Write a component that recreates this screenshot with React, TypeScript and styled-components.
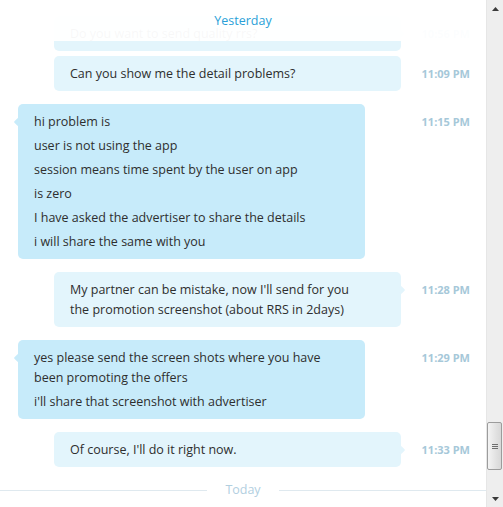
import React from "react";
import styled, { createGlobalStyle } from "styled-components";

const GlobalStyle = createGlobalStyle`
  html, body {
    margin: 0;
    padding: 0;
    background: #ffffff;
  }
  body {
    font-family: "Open Sans", "Noto Sans", sans-serif;
    -webkit-font-smoothing: antialiased;
  }
`;

type Side = "in" | "out";

type Message = {
  side: Side;
  time: string;
  nub: boolean;
  lines: string[];
};

const messages: Message[] = [
  { side: "out", time: "10:56 PM", nub: true, lines: ["Do you want to send quality rrs?"] },
  { side: "out", time: "11:09 PM", nub: false, lines: ["Can you show me the detail problems?"] },
  {
    side: "in",
    time: "11:15 PM",
    nub: true,
    lines: [
      "hi problem is",
      "user is not using the app",
      "session means time spent by the user on app",
      "is zero",
      "I have asked the advertiser to share the details",
      "i will share the same with you",
    ],
  },
  {
    side: "out",
    time: "11:28 PM",
    nub: true,
    lines: ["My partner can be mistake, now I'll send for you the promotion screenshot (about RRS in 2days)"],
  },
  {
    side: "in",
    time: "11:29 PM",
    nub: true,
    lines: [
      "yes please send the screen shots where you have been promoting the offers",
      "i'll share that screenshot with advertiser",
    ],
  },
  { side: "out", time: "11:33 PM", nub: true, lines: ["Of course, I'll do it right now."] },
];

export default function App() {
  return (
    <>
      <GlobalStyle />
      <Window>
        <Chat>
          <DayHeader>Yesterday</DayHeader>
          <List>
            {messages.map((m, i) => {
              const prev = messages[i - 1];
              const grouped = !!prev && prev.side === m.side;
              return (
                <Row key={i} $grouped={grouped} $first={i === 0}>
                  <Bubble $side={m.side}>
                    {m.nub && <Nub $side={m.side} />}
                    {m.lines.map((l, j) => (
                      <Line key={j}>{l}</Line>
                    ))}
                  </Bubble>
                  <Time>{m.time}</Time>
                </Row>
              );
            })}
            <Divider>
              <Rule />
              <DividerLabel>Today</DividerLabel>
              <Rule />
            </Divider>
          </List>
        </Chat>
        <Scrollbar>
          <ArrowButton>
            <svg width="7" height="4" viewBox="0 0 7 4">
              <path d="M0 4 L3.5 0 L7 4 Z" fill="#3a3a3a" />
            </svg>
          </ArrowButton>
          <Track>
            <Thumb>
              <Grip />
              <Grip />
              <Grip />
            </Thumb>
          </Track>
          <ArrowButton>
            <svg width="7" height="4" viewBox="0 0 7 4">
              <path d="M0 0 L7 0 L3.5 4 Z" fill="#3a3a3a" />
            </svg>
          </ArrowButton>
        </Scrollbar>
      </Window>
    </>
  );
}

const Window = styled.div`
  display: flex;
  width: 503px;
  height: 507px;
  overflow: hidden;
  background: #ffffff;
`;

const Chat = styled.div`
  position: relative;
  flex: 1;
  overflow: hidden;
`;

const DayHeader = styled.div`
  position: absolute;
  top: 0;
  left: 0;
  right: 0;
  height: 41px;
  z-index: 2;
  background: rgba(255, 255, 255, 0.965);
  color: #2a9fd8;
  font-size: 12.5px;
  line-height: 42px;
  text-align: center;
`;

const List = styled.div`
  display: flex;
  flex-direction: column;
  padding-top: 16px;
`;

const Row = styled.div<{ $grouped: boolean; $first: boolean }>`
  display: grid;
  grid-template-columns: 401px 1fr;
  margin-top: ${(p) => (p.$first ? 0 : p.$grouped ? 5 : 13)}px;
`;

const Bubble = styled.div<{ $side: Side }>`
  position: relative;
  width: 347px;
  box-sizing: border-box;
  margin-left: ${(p) => (p.$side === "in" ? 18 : 54)}px;
  padding: 8px 36px 7px 16px;
  border-radius: 5px;
  background: ${(p) => (p.$side === "in" ? "#c7ebfa" : "#e3f5fc")};
  display: flex;
  flex-direction: column;
  gap: 4px;
`;

const Nub = styled.span<{ $side: Side }>`
  position: absolute;
  top: 15px;
  ${(p) => (p.$side === "in" ? "left: -3px;" : "right: -3px;")}
  width: 6px;
  height: 6px;
  border-radius: 1px;
  background: inherit;
  transform: rotate(45deg);
`;

const Line = styled.div`
  color: #2e2e2e;
  font-size: 12.5px;
  line-height: 20px;
`;

const Time = styled.div`
  padding: 8px 16px 0 0;
  text-align: right;
  color: #a6c8d9;
  font-size: 11px;
  font-weight: 700;
  line-height: 20px;
`;

const Divider = styled.div`
  display: flex;
  align-items: center;
  margin-top: 15px;
  height: 16px;
`;

const Rule = styled.div`
  flex: 1;
  height: 1px;
  background: #dfe9ef;
`;

const DividerLabel = styled.span`
  padding: 0 18px;
  color: #b2cfdf;
  font-size: 12.5px;
  line-height: 16px;
`;

const Scrollbar = styled.div`
  width: 17px;
  display: flex;
  flex-direction: column;
  background: #eeeeee;
  border-left: 1px solid #e6e6e6;
  box-sizing: border-box;
`;

const ArrowButton = styled.div`
  height: 17px;
  display: flex;
  align-items: center;
  justify-content: center;
`;

const Track = styled.div`
  flex: 1;
  display: flex;
  flex-direction: column;
  justify-content: flex-end;
  padding-bottom: 20px;
`;

const Thumb = styled.div`
  height: 48px;
  margin: 0 1px 0 0;
  border: 1px solid #9c9c9c;
  border-radius: 2px;
  box-sizing: border-box;
  background: linear-gradient(to right, #f4f4f4, #e2e2e2 60%, #d8d8d8);
  display: flex;
  flex-direction: column;
  align-items: center;
  justify-content: center;
  gap: 1px;
`;

const Grip = styled.div`
  width: 6px;
  height: 1px;
  background: #6e6e6e;
`;
